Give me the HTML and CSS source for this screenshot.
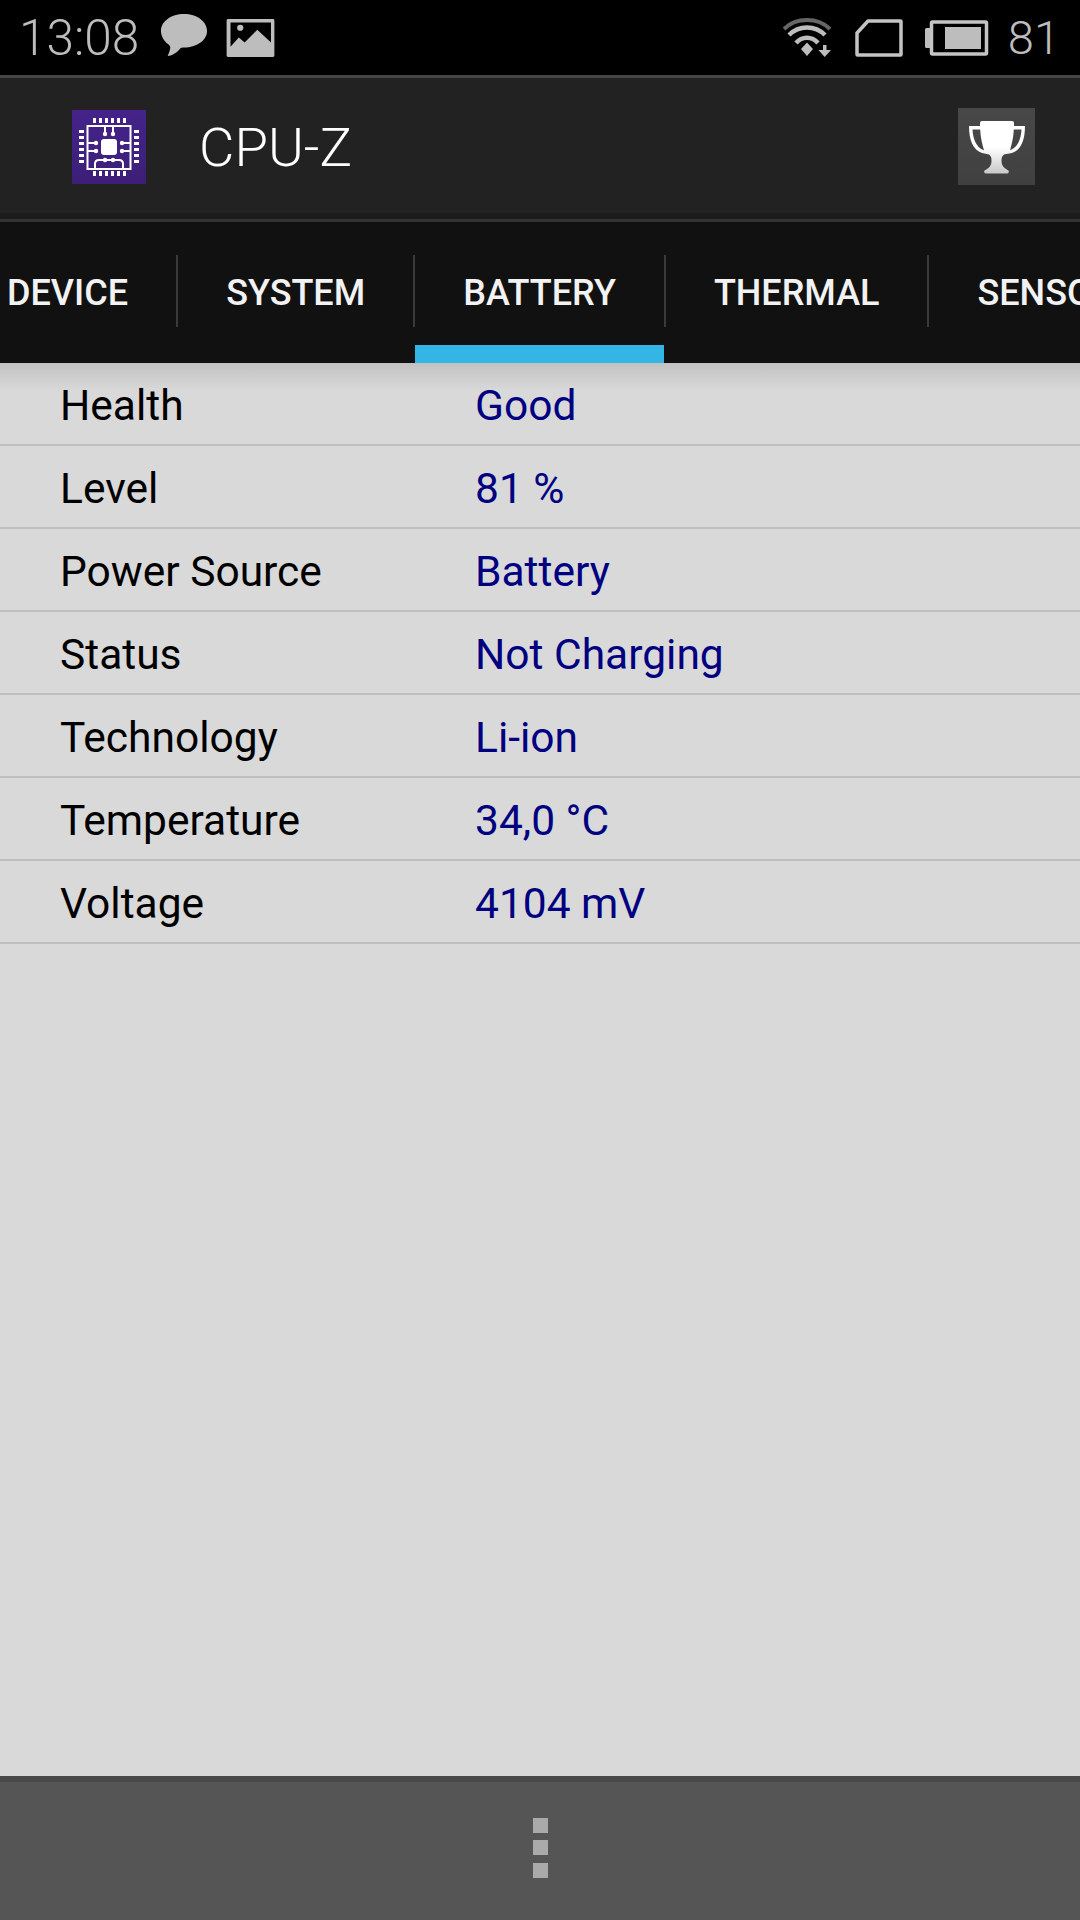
FILE: index.html
```html
<!DOCTYPE html>
<html lang="en">
<head>
    <meta charset="UTF-8">
    <meta name="viewport" content="width=device-width, initial-scale=1.0">
    <title>CPU-Z</title>
    <link rel="stylesheet" href="styles.css">
</head>
<body>
    <div class="phone">
        <!-- status bar -->
        <div class="status-bar">
            <span class="clock">13:08</span>
            <svg class="icon-chat" width="48" height="46" viewBox="0 0 50 46" preserveAspectRatio="none">
                <path d="M25 1C11.500 1 1 8.500 1 18c0 6 4 11 8.500 14 1 .7 1.500 2 1 4-.5 2.500-2 5.500-2.500 7 5-.5 10-3.500 13-7.500 1-.7 2-1 4-1 13 0 24-7 24-16.500S38.500 1 25 1z" fill="#bdbdbd"/>
            </svg>
            <svg class="icon-picture" width="49" height="39" viewBox="0 0 50 40">
                <path fill-rule="evenodd" d="M2 1h46a1.500 1.500 0 0 1 1.500 1.500v36A1.500 1.500 0 0 1 48 40H2a1.500 1.500 0 0 1-1.500-1.500v-36A1.500 1.500 0 0 1 2 1zm2.500 3.500v25L13 20l6 5 13-13 14 13V4.500z" fill="#bdbdbd"/>
                <circle cx="14.500" cy="10" r="3.200" fill="#bdbdbd"/>
            </svg>
            <span class="status-spacer"></span>
            <svg class="icon-wifi" width="50" height="40" viewBox="0 0 50 40">
                <path d="M1 11C13 -1 35 -1 47 11" fill="none" stroke="#666" stroke-width="4"/>
                <path d="M6 17C16 7 32 7 42 17" fill="none" stroke="#bdbdbd" stroke-width="4.500"/>
                <path d="M13 25C19 18 29 18 35 25" fill="none" stroke="#bdbdbd" stroke-width="4.500"/>
                <path d="M18 31L24 24.500 30 31 24 38z" fill="#bdbdbd"/>
                <path d="M40 27h3.500v5H48l-6.300 7-6.300-7H40z" fill="#bdbdbd"/>
            </svg>
            <svg class="icon-sd" width="48" height="38" viewBox="0 0 48 38">
                <path d="M13 2H45.500a.500.500 0 0 1 .500.500V35.500a.500.500 0 0 1-.500.500H2.500a.500.500 0 0 1-.500-.500V14z" fill="none" stroke="#c4c4c4" stroke-width="3.500" stroke-linejoin="round"/>
            </svg>
            <svg class="icon-battery" width="64" height="36" viewBox="0 0 64 36">
                <path d="M5 8H1.500A1.500 1.500 0 0 0 0 9.500v17A1.500 1.500 0 0 0 1.500 28H5z" fill="#bdbdbd"/>
                <rect x="6.500" y="2" width="55" height="32" rx="1" fill="none" stroke="#c4c4c4" stroke-width="3.500"/>
                <rect x="20" y="7" width="36" height="22" fill="#bdbdbd"/>
            </svg>
            <span class="level">81</span>
        </div>

        <!-- app bar -->
        <header class="app-bar">
            <svg class="app-logo" width="74" height="74" viewBox="0 0 74 74">
                <defs>
                    <linearGradient id="logoBg" x1="0" y1="0" x2="0" y2="1">
                        <stop offset="0" stop-color="#45238a"/>
                        <stop offset="1" stop-color="#3c1f78"/>
                    </linearGradient>
                </defs>
                <rect width="74" height="74" fill="url(#logoBg)"/>
                <g fill="#fff">
                    <rect x="21" y="8" width="3" height="5"/><rect x="27" y="8" width="3" height="5"/><rect x="33" y="8" width="3" height="5"/><rect x="39" y="8" width="3" height="5"/><rect x="45" y="8" width="3" height="5"/><rect x="51" y="8" width="3" height="5"/>
                    <rect x="21" y="61" width="3" height="5"/><rect x="27" y="61" width="3" height="5"/><rect x="33" y="61" width="3" height="5"/><rect x="39" y="61" width="3" height="5"/><rect x="45" y="61" width="3" height="5"/><rect x="51" y="61" width="3" height="5"/>
                    <rect x="7" y="20" width="5" height="3"/><rect x="7" y="26" width="5" height="3"/><rect x="7" y="32" width="5" height="3"/><rect x="7" y="38" width="5" height="3"/><rect x="7" y="44" width="5" height="3"/><rect x="7" y="50" width="5" height="3"/>
                    <rect x="62" y="20" width="5" height="3"/><rect x="62" y="26" width="5" height="3"/><rect x="62" y="32" width="5" height="3"/><rect x="62" y="38" width="5" height="3"/><rect x="62" y="44" width="5" height="3"/><rect x="62" y="50" width="5" height="3"/>
                    <rect x="29" y="29" width="16" height="16" rx="3"/>
                    <circle cx="33" cy="24" r="2.200"/><circle cx="41" cy="24" r="2.200"/>
                    <circle cx="24" cy="33" r="2.200"/><circle cx="24" cy="41" r="2.200"/>
                    <circle cx="50" cy="33" r="2.200"/><circle cx="50" cy="41" r="2.200"/>
                    <circle cx="33" cy="50" r="2.200"/><circle cx="41" cy="50" r="2.200"/>
                </g>
                <g fill="none" stroke="#fff" stroke-width="2">
                    <rect x="15.500" y="16" width="43" height="43"/>
                    <path d="M33 16v8M41 16v8M16 33h8M16 41h8M50 33h8M50 41h8M23 59v-5q0-4 4-4h20q4 0 4 4v5"/>
                </g>
            </svg>
            <span class="app-title">CPU-Z</span>
            <button class="trophy-button">
                <svg width="60" height="60" viewBox="0 0 60 60">
                    <path d="M15 4h30a2 2 0 0 1 2 2v3h11c0 14-4 24-13 27l-8 1.500c-2 1.500-2.500 3-2.500 6 0 5 2 7 6 9.500a1.800 1.800 0 0 1-1 3.500H19.500a1.800 1.800 0 0 1-1-3.500c4-2.500 6-4.500 6-9.500 0-3-.5-4.500-2.500-6L15 36C6 33 2 23 2 9h11V6a2 2 0 0 1 2-2zM5.500 12.500c.5 9 3.500 18 11.500 20.800-1.800-6-3.500-13-3.800-20.800zm49 0h-7.700c-.3 7.800-2 14.800-3.800 20.800 8-2.800 11-11.800 11.500-20.800z" fill="url(#trophyFill)" fill-rule="evenodd"/>
                    <defs>
                        <linearGradient id="trophyFill" x1="0" y1="0" x2="0" y2="1">
                            <stop offset="0.5" stop-color="#fff"/>
                            <stop offset="1" stop-color="#c8c8c8"/>
                        </linearGradient>
                    </defs>
                </svg>
            </button>
        </header>

        <!-- tabs -->
        <nav class="tabs">
            <div class="tab tab-first">DEVICE</div>
            <div class="tab">SYSTEM</div>
            <div class="tab active">BATTERY</div>
            <div class="tab">THERMAL</div>
            <div class="tab">SENSORS</div>
        </nav>

        <!-- battery info -->
        <main class="content">
            <div class="row"><span class="label">Health</span><span class="value">Good</span></div>
            <div class="row"><span class="label">Level</span><span class="value">81 %</span></div>
            <div class="row"><span class="label">Power Source</span><span class="value">Battery</span></div>
            <div class="row"><span class="label">Status</span><span class="value">Not Charging</span></div>
            <div class="row"><span class="label">Technology</span><span class="value">Li-ion</span></div>
            <div class="row"><span class="label">Temperature</span><span class="value">34,0 °C</span></div>
            <div class="row"><span class="label">Voltage</span><span class="value">4104 mV</span></div>
        </main>

        <!-- overflow menu -->
        <footer class="menu-bar">
            <div class="menu-dots">
                <span></span>
                <span></span>
                <span></span>
            </div>
        </footer>
    </div>
</body>
</html>
```

FILE: styles.css
```css
* {
    margin: 0;
    padding: 0;
    box-sizing: border-box;
    font-family: Roboto, "Liberation Sans", sans-serif;
}

body {
    background-color: #000;
}

.phone {
    width: 1080px;
    height: 1920px;
    display: flex;
    flex-direction: column;
    overflow: hidden;
}

/* status bar */
.status-bar {
    height: 78px;
    flex: none;
    background: #000;
    border-bottom: 3px solid #444;
    display: flex;
    align-items: center;
    padding: 0 20px 0 19px;
    color: #bdbdbd;
}

.clock {
    font-size: 49.500px;
    font-weight: 300;
    margin-right: 21px;
}

.icon-chat {
    margin: -3px 18px 0 0;
}

.icon-picture {
    margin-top: -1px;
}

.status-spacer {
    flex: 1;
}

.icon-wifi {
    margin: 0 22px 0 0;
}

.icon-sd {
    margin: 0 22px 0 0;
}

.icon-battery {
    margin: 0 19px 0 0;
}

.level {
    font-size: 47px;
    font-weight: 300;
}

/* app bar */
.app-bar {
    height: 144px;
    flex: none;
    background: linear-gradient(#222 0, #222 135px, #1c1c1c 135px, #1c1c1c 141px, #333 141px);
    display: flex;
    align-items: center;
    padding: 0 45px 7px 72px;
}

.app-title {
    flex: 1;
    margin-left: 53px;
    font-size: 54.500px;
    font-weight: 300;
    color: #fff;
}

.trophy-button {
    width: 77px;
    height: 77px;
    border: none;
    background: linear-gradient(#484848, #404040);
    display: flex;
    align-items: center;
    justify-content: center;
}

/* tabs */
.tabs {
    height: 141px;
    flex: none;
    background: #111;
    display: flex;
    overflow: hidden;
}

.tab {
    position: relative;
    flex: none;
    padding: 2px 49px 0;
    line-height: 139px;
    font-size: 36px;
    font-weight: 500;
    color: #f2f2f2;
}

.tab::after {
    content: "";
    position: absolute;
    right: -1px;
    top: 33px;
    width: 2px;
    height: 72px;
    background: #3a3a3a;
}

.tab-first {
    margin-left: -42px;
}

.tab:last-child::after {
    display: none;
}

.tab.active::before {
    content: "";
    position: absolute;
    left: 1px;
    right: 1px;
    bottom: 0;
    height: 18px;
    background: #33b5e5;
}

/* info rows */
.content {
    flex: 1;
    background: #d9d9d9;
    position: relative;
}

.content::before {
    content: "";
    position: absolute;
    left: 0;
    right: 0;
    top: 0;
    height: 28px;
    background: linear-gradient(#c2c2c2, #d9d9d9);
}

.row {
    position: relative;
    height: 83px;
    display: flex;
    align-items: center;
    padding: 4px 0 0 60px;
    border-bottom: 2px solid #bfbfbf;
    font-size: 42.500px;
}

.label {
    width: 415px;
    color: #000;
}

.value {
    color: #000080;
}

/* bottom menu */
.menu-bar {
    height: 144px;
    flex: none;
    background: #555;
    border-top: 6px solid #4a4a4a;
    display: flex;
    align-items: center;
    justify-content: center;
    padding-bottom: 7px;
}

.menu-dots {
    display: flex;
    flex-direction: column;
    gap: 7.500px;
}

.menu-dots span {
    display: block;
    width: 15px;
    height: 15px;
    background: #aaa;
}
```
